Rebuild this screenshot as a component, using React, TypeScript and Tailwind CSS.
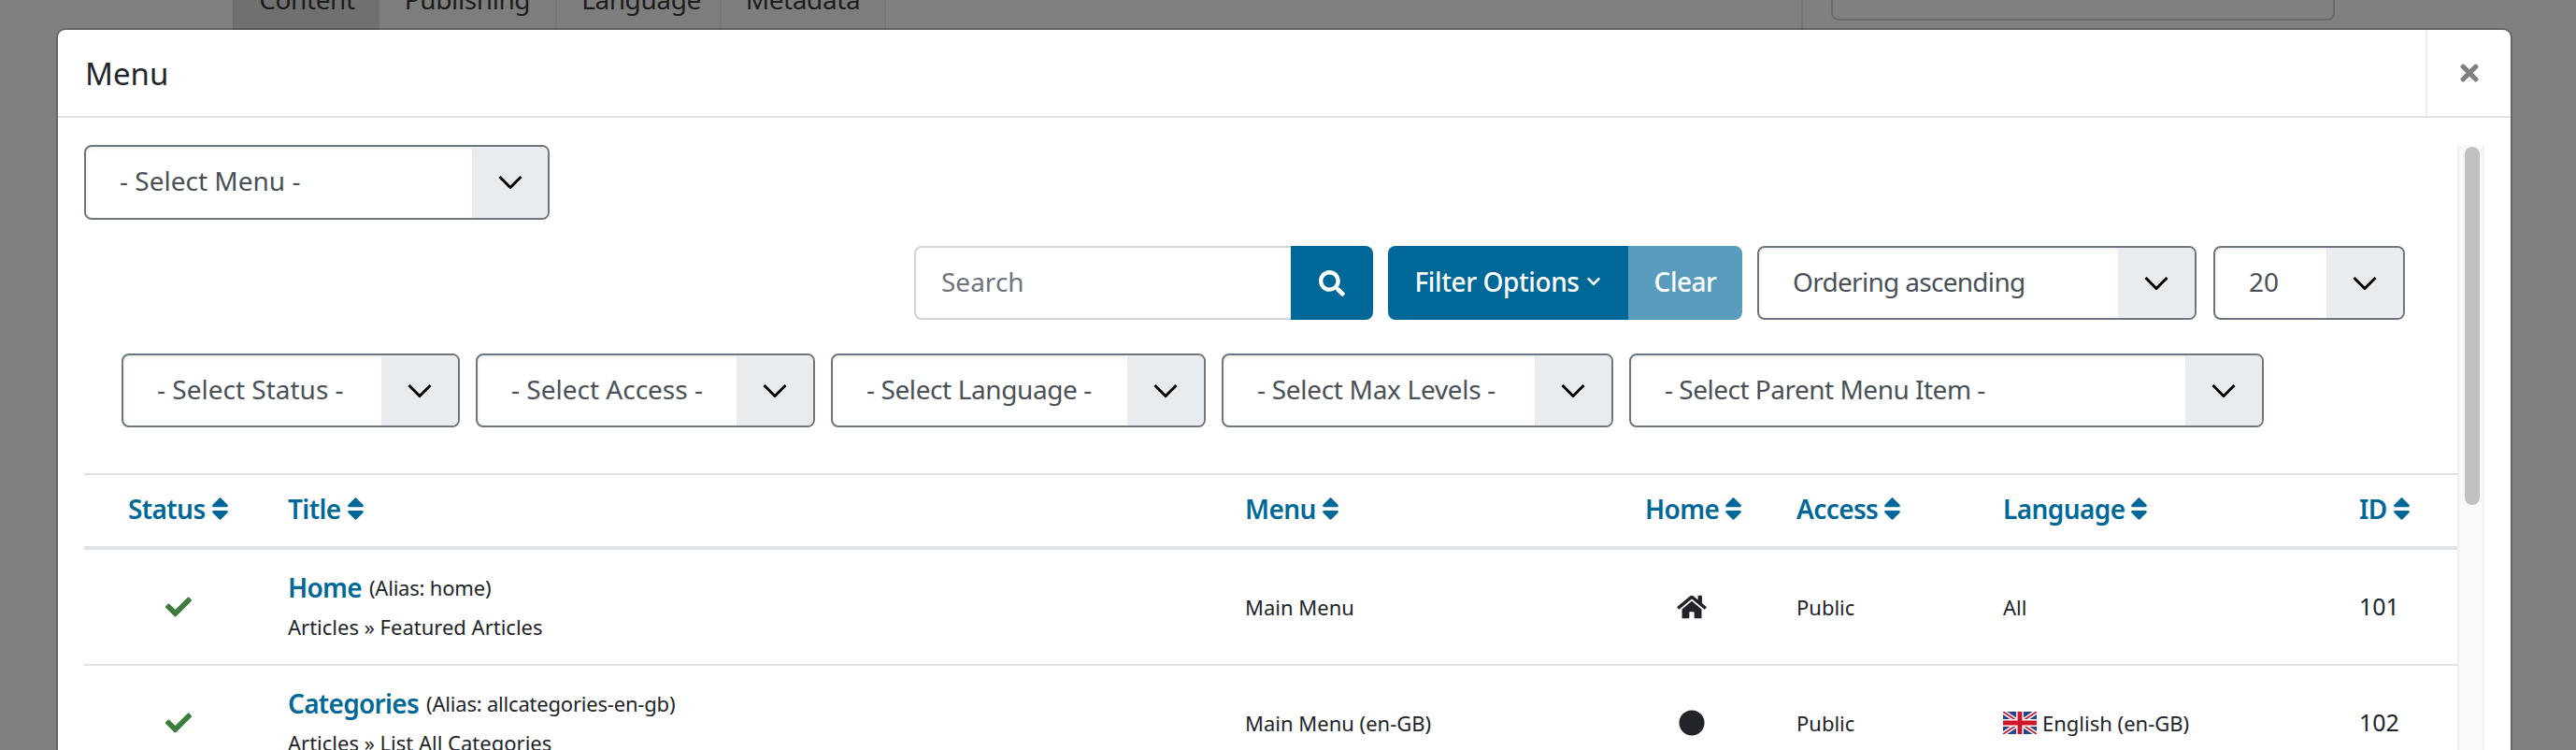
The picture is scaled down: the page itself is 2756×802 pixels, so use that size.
import { FaCheck, FaChevronDown, FaCircle, FaHome, FaSearch, FaSort, FaTimes } from "react-icons/fa";

const selectClass =
  "flex h-[79px] items-stretch overflow-hidden rounded-lg border-2 border-[#6d757e] bg-white shadow-[inset_0_2px_4px_rgba(0,0,0,0.075)]";

function SelectBox({
  label,
  widthClass,
  arrowClass = "w-[82px]",
  textClass = "pl-[36px]",
}: {
  label: string;
  widthClass: string;
  arrowClass?: string;
  textClass?: string;
}) {
  return (
    <div className={`${selectClass} ${widthClass}`}>
      <span className={`flex flex-1 items-center whitespace-nowrap pb-[3px] text-[28px] text-[#495057] ${textClass}`}>
        {label}
      </span>
      <span className={`flex items-center justify-center bg-[#e9ecef] ${arrowClass}`}>
        <svg width="26" height="14" viewBox="0 0 26 14" fill="none" stroke="#000" strokeWidth="3">
          <path d="M1.5 1 L13 12.5 L24.5 1" />
        </svg>
      </span>
    </div>
  );
}

function SortHead({ label, className = "" }: { label: string; className?: string }) {
  return (
    <div className={`flex items-center gap-[6px] pb-[4px] text-[28px] font-semibold tracking-[-0.6px] text-[#006898] ${className}`}>
      <span>{label}</span>
      <FaSort className="h-[30px] w-[19px]" />
    </div>
  );
}

function UkFlag() {
  return (
    <svg width="36" height="24" viewBox="0 0 60 40" className="shrink-0">
      <rect width="60" height="40" fill="#27408b" />
      <path d="M0 0 L60 40 M60 0 L0 40" stroke="#fff" strokeWidth="8" />
      <path d="M0 0 L60 40 M60 0 L0 40" stroke="#cf142b" strokeWidth="3" />
      <path d="M30 0 V40 M0 20 H60" stroke="#fff" strokeWidth="13" />
      <path d="M30 0 V40 M0 20 H60" stroke="#cf142b" strokeWidth="8" />
    </svg>
  );
}

const columns = "grid grid-cols-[202px_1024px_428px_162px_221px_381px_121px]";

const rows = [
  {
    title: "Home",
    alias: "(Alias: home)",
    type: "Articles » Featured Articles",
    menu: "Main Menu",
    home: <FaHome className="h-[28px] w-[34px] text-[#212529]" />,
    language: <span>All</span>,
    id: "101",
  },
  {
    title: "Categories",
    alias: "(Alias: allcategories-en-gb)",
    type: "Articles » List All Categories",
    menu: "Main Menu (en-GB)",
    home: <FaCircle className="h-[28px] w-[28px] text-[#212529]" />,
    language: (
      <span className="flex items-center gap-[6px]">
        <UkFlag />
        English (en-GB)
      </span>
    ),
    id: "102",
  },
];

export default function App() {
  return (
    <div className="relative h-[802px] w-[2756px] overflow-hidden bg-[#808080] font-['Noto_Sans','Open_Sans',sans-serif]">
      {/* page behind the backdrop */}
      <div className="flex h-[32px] pl-[249px] text-[28px] leading-[32px] tracking-[-0.4px] text-[#1c1c1c]">
        <div className="flex w-[157px] items-end justify-center overflow-hidden border-l-2 border-[#6c6c6c] bg-[#707070]">
          <span className="-translate-y-[17px]">Content</span>
        </div>
        <div className="flex w-[190px] items-end justify-center overflow-hidden border-r-2 border-[#767676] bg-[#7d7d7d]">
          <span className="-translate-y-[17px]">Publishing</span>
        </div>
        <div className="flex w-[176px] items-end justify-center overflow-hidden border-r-2 border-[#767676] bg-[#7d7d7d] pl-[6px]">
          <span className="-translate-y-[17px]">Language</span>
        </div>
        <div className="flex w-[176px] items-end justify-center overflow-hidden border-r-2 border-[#767676] bg-[#7d7d7d]">
          <span className="-translate-y-[17px]">Metadata</span>
        </div>
      </div>
      <div className="absolute left-[1927px] top-0 h-[32px] w-[2px] bg-[#747474]" />
      <div className="absolute left-[1959px] top-[-20px] h-[42px] w-[539px] rounded-lg border-2 border-[#6b6b6b]" />

      {/* modal */}
      <div className="absolute left-[62px] top-[32px] h-[780px] w-[2624px] overflow-hidden rounded-t-lg bg-white shadow-[0_0_0_2px_rgba(0,0,0,0.2)]">
        <div className="flex h-[94px] items-stretch border-b-2 border-[#dee2e6]">
          <h3 className="flex flex-1 items-center pl-[29px] text-[33px] leading-none text-[#212529]">Menu</h3>
          <div className="flex w-[91px] items-center justify-center border-l-2 border-[#ededed]">
            <FaTimes className="h-[28px] w-[24px] text-[#808080]" />
          </div>
        </div>

        <div className="flex items-stretch pt-[29px]">
          <div className="ml-[28px] w-[2539px]">
            <SelectBox label="- Select Menu -" widthClass="w-[498px] !h-[80px]" textClass="pl-[36px] !pb-[5px]" arrowClass="w-[81px]" />

            <div className="mt-[28px] flex justify-end gap-[18px] pr-[56px]">
              <div className="flex h-[79px]">
                <div className="flex w-[403px] items-center rounded-l-lg border-2 border-r-0 border-[#ced4da] pb-[3px] pl-[27px] text-[28px] text-[#6d757e]">
                  Search
                </div>
                <div className="flex w-[88px] items-center justify-center rounded-r-lg bg-[#006898]">
                  <FaSearch className="h-[28px] w-[28px] text-white" />
                </div>
              </div>
              <div className="mx-[-2px] flex h-[79px] overflow-hidden rounded-lg text-[28px] text-white">
                <div className="flex w-[257px] items-center justify-center gap-[6px] bg-[#006898] pb-[3px] font-medium tracking-[-0.4px]">
                  Filter Options
                  <FaChevronDown className="h-[16px] w-[18px]" />
                </div>
                <div className="flex w-[122px] items-center justify-center bg-[#5a9cbd] pb-[3px] font-medium tracking-[-0.5px]">Clear</div>
              </div>
              <SelectBox label="Ordering ascending" widthClass="w-[470px]" textClass="pl-[36px] tracking-[-0.7px]" />
              <SelectBox label="20" widthClass="w-[205px]" />
            </div>

            <div className="mt-[36px] flex gap-[17px] pl-[40px]">
              <SelectBox label="- Select Status -" widthClass="w-[362px]" />
              <SelectBox label="- Select Access -" widthClass="w-[363px]" />
              <SelectBox label="- Select Language -" widthClass="w-[401px]" textClass="pl-[36px] tracking-[-0.4px]" />
              <SelectBox label="- Select Max Levels -" widthClass="w-[419px]" textClass="pl-[36px] tracking-[-0.3px]" />
              <SelectBox label="- Select Parent Menu Item -" widthClass="w-[679px]" textClass="pl-[36px] tracking-[-0.5px]" />
            </div>

            <div className="mt-[49px]">
              <div className={`${columns} h-[82px] items-center border-t-2 border-b-4 border-[#dee2e6]`}>
                <SortHead label="Status" className="pl-[47px]" />
                <SortHead label="Title" className="pl-[16px]" />
                <SortHead label="Menu" className="pl-[16px]" />
                <SortHead label="Home" className="pl-[16px]" />
                <SortHead label="Access" className="pl-[16px]" />
                <SortHead label="Language" className="pl-[16px]" />
                <SortHead label="ID" className="pl-[16px]" />
              </div>
              {rows.map((row) => (
                <div key={row.id} className={`${columns} h-[124px] items-center border-b-2 border-[#dee2e6] text-[22px] text-[#212529]`}>
                  <div className="flex justify-center">
                    <FaCheck className="h-[28px] w-[32px] text-[#3c7d3c]" />
                  </div>
                  <div className="pb-[6px] pl-[16px]">
                    <div className="flex h-[44px] items-center gap-[8px]">
                      <span className="text-[28px] font-semibold tracking-[-0.7px] text-[#006898]">{row.title}</span>
                      <span className="text-[22px] tracking-[-0.2px]">{row.alias}</span>
                    </div>
                    <div className="mt-[4px] leading-[32px]">{row.type}</div>
                  </div>
                  <div className="pl-[16px]">{row.menu}</div>
                  <div className="flex justify-center pr-[30px]">{row.home}</div>
                  <div className="pl-[16px]">{row.language ? "Public" : null}</div>
                  <div className="pl-[16px]">{row.language}</div>
                  <div className="pl-[16px] text-[25px]">{row.id}</div>
                </div>
              ))}
            </div>
          </div>

          {/* scrollbar */}
          <div className="relative w-[29px] border-x-2 border-[#f0f0f0] bg-[#fafafa]">
            <div className="absolute left-[6px] top-[2px] h-[383px] w-[16px] rounded-full bg-[#c1c1c1]" />
          </div>
        </div>
      </div>
    </div>
  );
}
